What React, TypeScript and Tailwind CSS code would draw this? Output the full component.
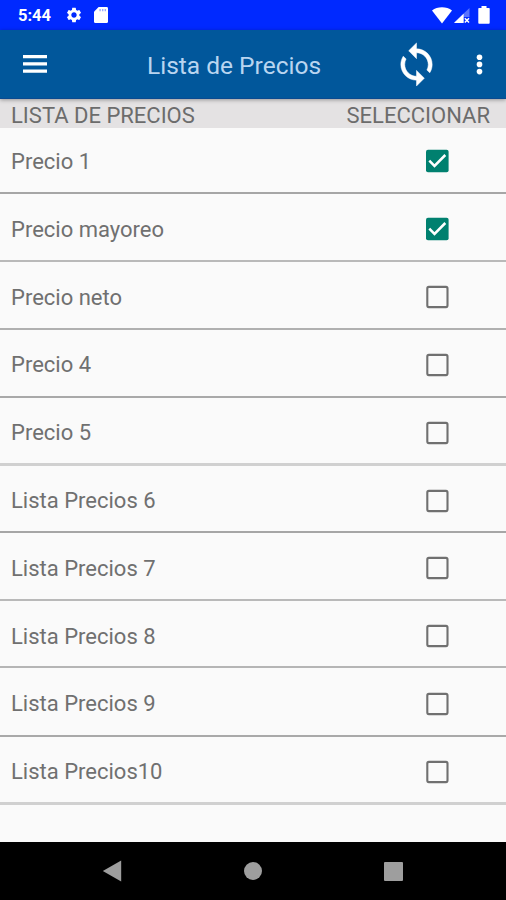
import { MdSettings } from 'react-icons/md';

/* Filas de la lista: alto y línea divisoria de cada una */
const precios = [
    { label: 'Precio 1', checked: true, row: 'h-[66px] pt-0.5 border-b-2 border-[#a6a6a6]' },
    { label: 'Precio mayoreo', checked: true, row: 'h-[68px] pt-1 border-b-2 border-[#b9b9b9]' },
    { label: 'Precio neto', checked: false, row: 'h-[68px] pt-1 border-b-2 border-[#b0b0b0]' },
    { label: 'Precio 4', checked: false, row: 'h-[68px] pt-[3px] border-b-2 border-[#a9a9a9]' },
    { label: 'Precio 5', checked: false, row: 'h-[68px] pt-1 border-b-3 border-[#d0d0d0]' },
    { label: 'Lista Precios 6', checked: false, row: 'h-[67px] pt-1 border-b-2 border-[#a6a6a6]' },
    { label: 'Lista Precios 7', checked: false, row: 'h-[68px] pt-1 border-b-2 border-[#b9b9b9]' },
    { label: 'Lista Precios 8', checked: false, row: 'h-[67px] pt-[5px] border-b-2 border-[#b5b5b5]' },
    { label: 'Lista Precios 9', checked: false, row: 'h-[69px] pt-1 border-b-2 border-[#a9a9a9]' },
    { label: 'Lista Precios10', checked: false, row: 'h-[68px] pt-1 border-b-3 border-[#d0d0d0]' },
];

function StatusBar() {
    return (
        <div className="flex h-[30px] shrink-0 items-center bg-[#0029ff] pl-[18px] pr-4 text-white">
            <span className="w-[47px] pt-0.5 text-[16.5px] font-bold leading-[30px]">5:44</span>
            <MdSettings size={18} />
            {/* Tarjeta SD */}
            <svg className="ml-[11px]" width="14" height="16" viewBox="0 0 14 16" fill="currentColor">
                <path d="M4.6 0H12.6Q14 0 14 1.4V14.4Q14 16 12.6 16H1.4Q0 16 0 14.4V4.8Z" />
                <path d="M5.4 2h1.4v2.2H5.4zM8 2h1.4v2.2H8zM10.6 2H12v2.2h-1.4z" fill="#0029ff" fillOpacity=".4" />
            </svg>
            <svg className="ml-auto" width="20" height="17" viewBox="0 0 20 17" fill="currentColor">
                <path d="M0 3.4C5.4-.7 14.6-.7 20 3.4L10 16.5Z" />
            </svg>
            <svg className="ml-0.5" width="16" height="17" viewBox="0 0 16 17" fill="currentColor">
                <path d="M15.5 1V10H9.5V15.5H0Z" fillOpacity=".35" />
                <path d="M9.6 6.8V16H0Z" />
                <path d="m10.8 11.2 4.2 4.3m0-4.3-4.2 4.3" stroke="currentColor" strokeWidth="1.5" />
            </svg>
            <svg className="ml-2" width="12" height="18" viewBox="0 0 12 18" fill="currentColor">
                <path d="M3.5 0h5v2H11q.7 0 .7.8v14q0 .9-.8.9H1.1q-.8 0-.8-.9v-14Q.3 2 1 2h2.5Z" />
            </svg>
        </div>
    );
}

function SyncIcon() {
    return (
        <svg className="ml-auto" width="47" height="47" viewBox="0 0 24 24" fill="currentColor" stroke="currentColor" strokeWidth=".25">
            <path d="M12 4V1L8 5l4 4V6c3.31 0 6 2.69 6 6 0 1.01-.25 1.97-.7 2.8l1.46 1.46C19.54 15.03 20 13.57 20 12c0-4.42-3.58-8-8-8z" />
            <path d="M12 18c-3.31 0-6-2.69-6-6 0-1.01.25-1.97.7-2.8L5.24 7.74C4.46 8.97 4 10.43 4 12c0 4.42 3.58 8 8 8v3l4-4-4-4z" />
        </svg>
    );
}

function AppBar() {
    return (
        <header className="relative z-10 flex h-[69px] shrink-0 items-center border-b border-[#0a4a90] bg-[#01579b] pl-[23px] pr-[23px] text-white shadow-[0_1px_4px_rgba(0,0,0,0.35)]">
            <svg width="24" height="18" viewBox="0 0 24 18" fill="currentColor">
                <path d="M0 0h24v3.3H0zM0 7.3h24v3.3H0zM0 14.5h24v3.3H0z" />
            </svg>
            <h1 className="ml-[100px] pt-[3px] text-[24.5px] leading-[30px] text-[#b9d5f0]">Lista de Precios</h1>
            <SyncIcon />
            <svg className="ml-9" width="7" height="21" viewBox="0 0 7 21" fill="currentColor">
                <circle cx="3.5" cy="3.2" r="2.8" />
                <circle cx="3.5" cy="10.4" r="2.8" />
                <circle cx="3.5" cy="17.6" r="2.8" />
            </svg>
        </header>
    );
}

function Checkbox({ checked }: { checked: boolean }) {
    return (
        <svg width="24" height="24" viewBox="0 0 24 24" fill="none">
            {checked ? (
                <>
                    <rect x="1" y=".7" width="22.6" height="22.6" rx="2" fill="#00806f" />
                    <path d="m4.3 11.6 5.2 5.3L20.3 6" stroke="#fff" strokeWidth="2.5" />
                </>
            ) : (
                <rect x="2.3" y="1.9" width="20.2" height="20.2" rx="1.5" stroke="#707070" strokeWidth="2.1" />
            )}
        </svg>
    );
}

function NavBar() {
    return (
        <nav className="flex h-[58px] shrink-0 items-center bg-black pl-[102px] pr-[103px] text-[#9e9e9e]">
            <svg width="20" height="22" viewBox="0 0 20 22" fill="currentColor">
                <path d="M.8 11 19.2.4v21.2Z" />
            </svg>
            <span className="ml-[122px] size-[18px] rounded-full bg-current" />
            <span className="ml-auto size-[19px] rounded-[1px] bg-current" />
        </nav>
    );
}

export default function App() {
    return (
        <div className="flex h-[900px] w-[506px] flex-col overflow-hidden bg-[#fafafa] font-['Roboto',sans-serif]">
            <StatusBar />
            <AppBar />
            <div className="flex h-[29px] shrink-0 items-center justify-between bg-[#e4e2e3] pl-[11px] pr-4 pt-1 text-[22px] leading-[25px] text-[#6c6c6c]">
                <span>LISTA DE PRECIOS</span>
                <span>SELECCIONAR</span>
            </div>
            <main className="flex-1 text-[22px] text-[#707070]">
                {precios.map(({ label, checked, row }) => (
                    <div key={label} className={`flex items-center justify-between pl-[11px] pr-[57px] ${row}`}>
                        <span>{label}</span>
                        <Checkbox checked={checked} />
                    </div>
                ))}
            </main>
            <NavBar />
        </div>
    );
}
